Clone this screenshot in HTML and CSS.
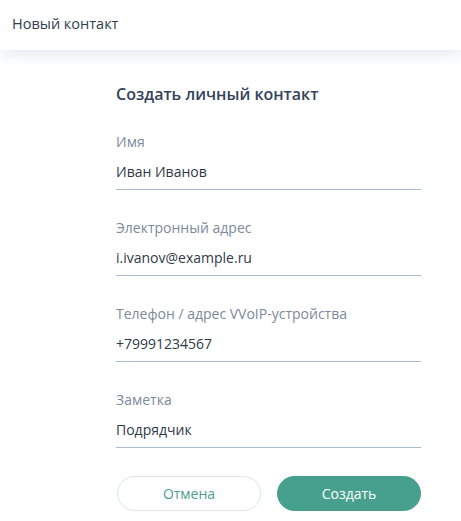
FILE: index.html
```html
<!DOCTYPE html>
<html lang="ru">
<head>
<meta charset="utf-8">
<title>Новый контакт</title>
<link rel="stylesheet" href="styles.css">
</head>
<body>
<header class="topbar">
  <span class="topbar-title">Новый контакт</span>
</header>
<main class="content">
  <form class="contact-form">
    <h1 class="form-title">Создать личный контакт</h1>
    <div class="field">
      <label class="field-label">Имя</label>
      <div class="field-value">Иван Иванов</div>
    </div>
    <div class="field">
      <label class="field-label">Электронный адрес</label>
      <div class="field-value">i.ivanov@example.ru</div>
    </div>
    <div class="field">
      <label class="field-label">Телефон / адрес VVoIP-устройства</label>
      <div class="field-value">+79991234567</div>
    </div>
    <div class="field">
      <label class="field-label">Заметка</label>
      <div class="field-value">Подрядчик</div>
    </div>
    <div class="actions">
      <button type="button" class="btn btn-cancel">Отмена</button>
      <button type="button" class="btn btn-primary">Создать</button>
    </div>
  </form>
</main>
</body>
</html>
```
FILE: styles.css
```css
html, body {
  margin: 0;
  padding: 0;
  background: #ffffff;
}
body {
  font-family: "Open Sans", "Noto Sans", sans-serif;
  color: #2e3a48;
  width: 461px;
  height: 521px;
  overflow: hidden;
}
.topbar {
  height: 50px;
  display: flex;
  align-items: center;
  padding-left: 12px;
  background: #ffffff;
  box-shadow: 0 4px 16px rgba(90, 110, 140, 0.16);
  position: relative;
}
.topbar-title {
  font-size: 14.5px;
  color: #2f3e52;
  line-height: 20px;
  margin-top: -3px;
}
.content {
  display: flex;
}
.contact-form {
  margin-left: 116px;
  width: 305px;
  display: flex;
  flex-direction: column;
}
.form-title {
  margin: 33px 0 27px 0;
  font-size: 16px;
  font-weight: 600;
  line-height: 22px;
  color: #34425a;
}
.field {
  display: flex;
  flex-direction: column;
  margin-bottom: 28px;
}
.field:last-of-type {
  margin-bottom: 25px;
}
.field-label {
  font-size: 14px;
  line-height: 20px;
  color: #7b8a9c;
  margin-bottom: 10px;
}
.field-value {
  font-size: 14px;
  line-height: 20px;
  color: #2f3a47;
  padding-bottom: 7px;
  border-bottom: 1px solid #a7bbd2;
}
.actions {
  display: flex;
  gap: 16px;
  padding-left: 1px;
}
.btn {
  width: 144px;
  height: 35px;
  border-radius: 18px;
  font-family: "Open Sans", "Noto Sans", sans-serif;
  font-size: 14px;
  cursor: pointer;
  padding: 0;
}
.btn-cancel {
  background: #ffffff;
  border: 1px solid #dbe4ef;
  color: #4b9e8c;
}
.btn-primary {
  background: #47a08e;
  border: 1px solid #47a08e;
  color: #ffffff;
}
```
